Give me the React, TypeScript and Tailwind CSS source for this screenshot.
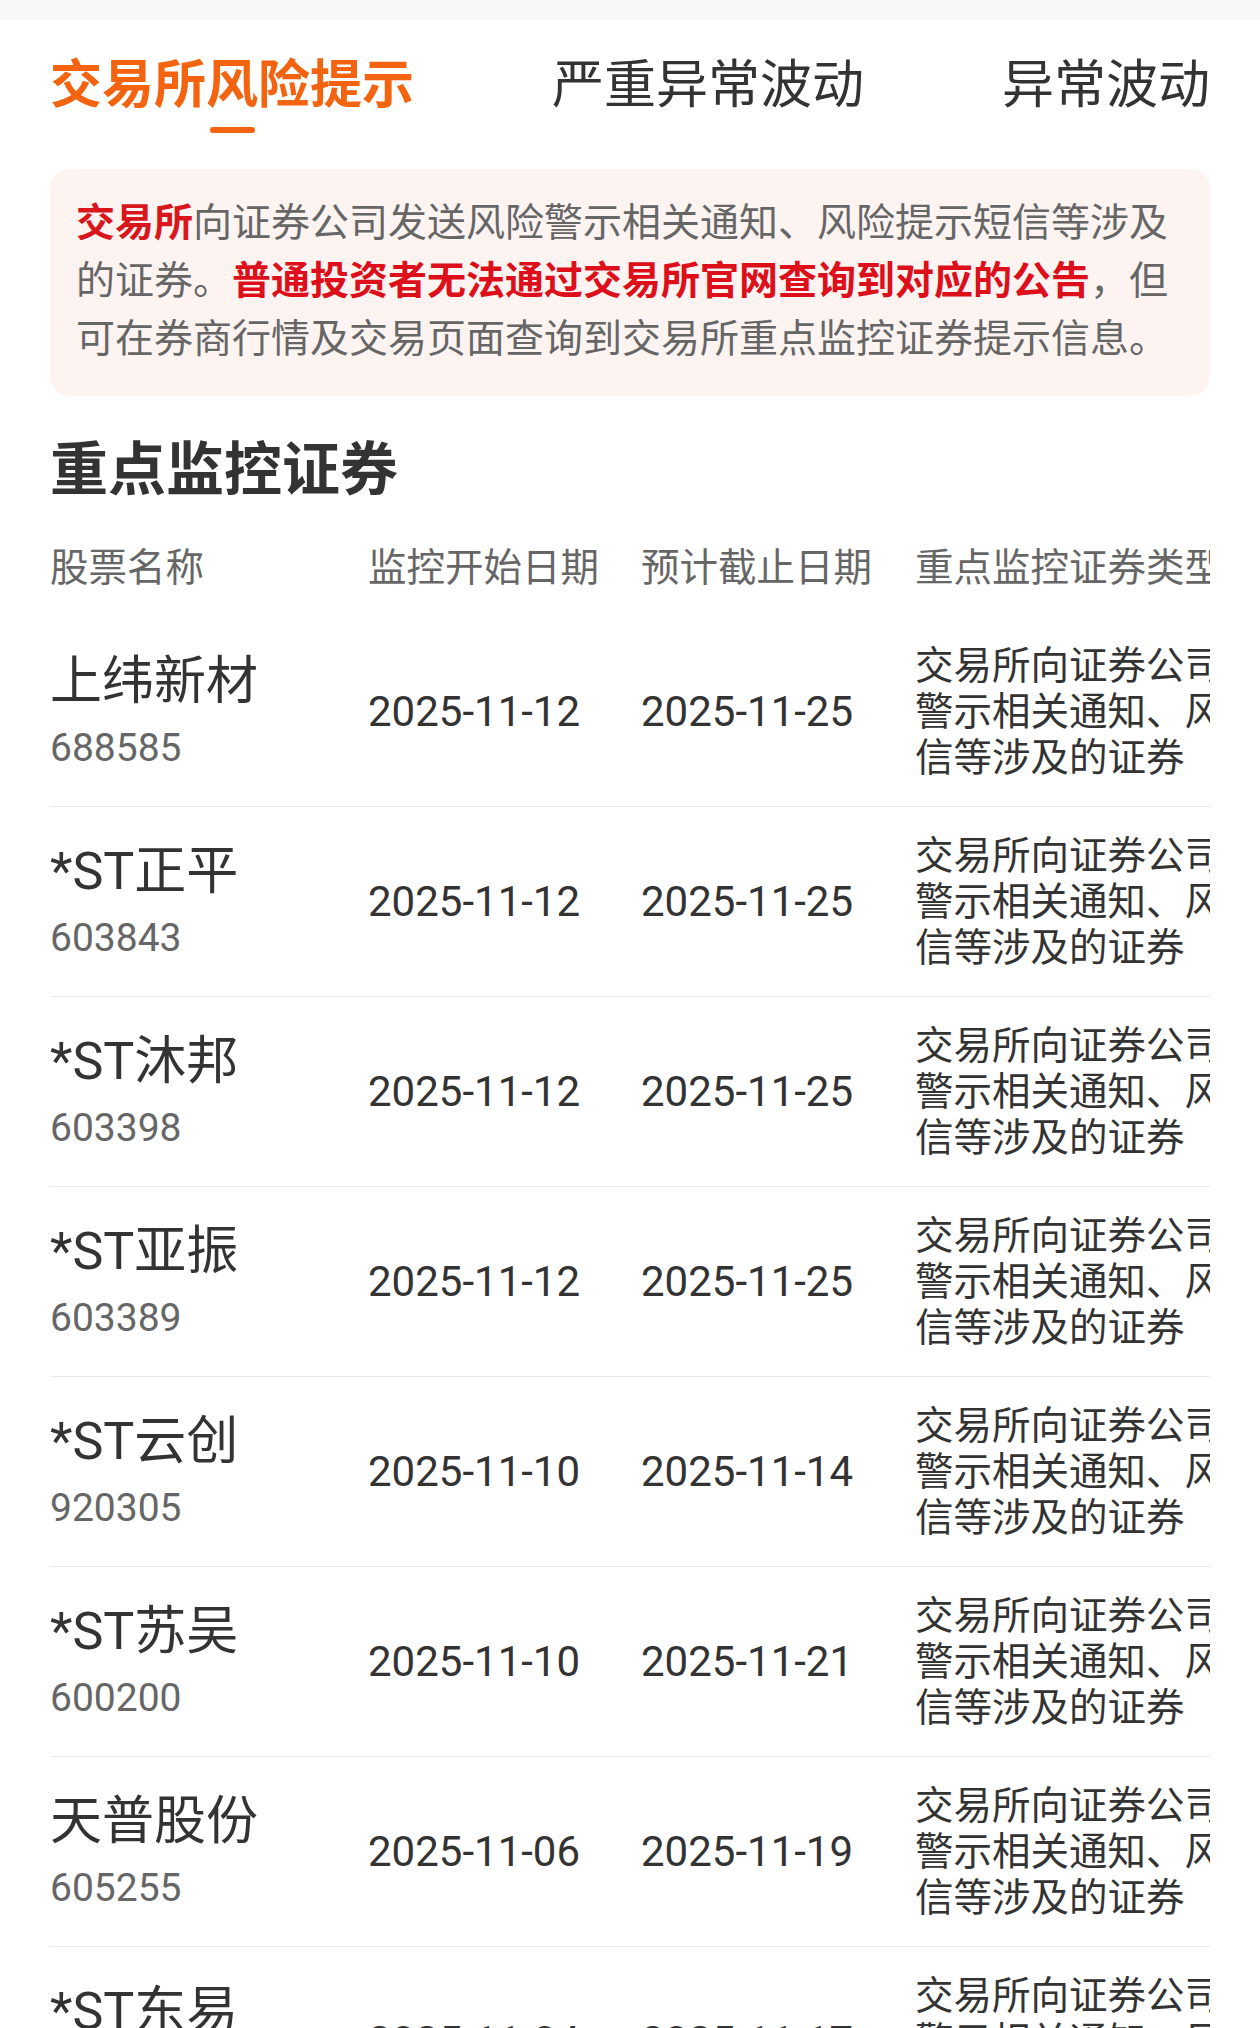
import React from "react";

const rows = [
  { name: "上纬新材", code: "688585", start: "2025-11-12", end: "2025-11-25" },
  { name: "*ST正平", code: "603843", start: "2025-11-12", end: "2025-11-25" },
  { name: "*ST沐邦", code: "603398", start: "2025-11-12", end: "2025-11-25" },
  { name: "*ST亚振", code: "603389", start: "2025-11-12", end: "2025-11-25" },
  { name: "*ST云创", code: "920305", start: "2025-11-10", end: "2025-11-14" },
  { name: "*ST苏吴", code: "600200", start: "2025-11-10", end: "2025-11-21" },
  { name: "天普股份", code: "605255", start: "2025-11-06", end: "2025-11-19" },
  { name: "*ST东易", code: "002713", start: "2025-11-04", end: "2025-11-17" },
];

const typeText = "交易所向证券公司发送风险警示相关通知、风险提示短信等涉及的证券";

export default function App() {
  return (
    <div className="min-h-[2028px] bg-white font-[Roboto,'Noto_Sans_CJK_SC',sans-serif] text-[#333]">
      <div className="h-[20px] bg-[#f6f7f9]" />

      {/* Tabs */}
      <div className="flex justify-between px-[50px] pt-[40px]">
        <div className="flex flex-col items-center">
          <span className="text-[52px] leading-[52px] font-bold text-[#f4630f] whitespace-nowrap">交易所风险提示</span>
          <span className="mt-[15px] h-[6px] w-[45px] rounded-full bg-[#f4630f]" />
        </div>
        <div className="flex flex-col items-center">
          <span className="text-[52px] leading-[52px] text-[#333] whitespace-nowrap">严重异常波动</span>
        </div>
        <div className="flex flex-col items-center">
          <span className="text-[52px] leading-[52px] text-[#333] whitespace-nowrap">异常波动</span>
        </div>
      </div>

      {/* Notice */}
      <div className="mx-[50px] mt-[36px] rounded-[20px] bg-[#fdf4f2] px-[26px] pt-[25px] pb-[28px] text-[39px] leading-[58px] text-[#666]">
        <span className="font-bold text-[#d9161b]">交易所</span>
        向证券公司发送风险警示相关通知、风险提示短信等涉及的证券。
        <span className="font-bold text-[#dc0f1a]">普通投资者无法通过交易所官网查询到对应的公告</span>
        ，但可在券商行情及交易页面查询到交易所重点监控证券提示信息。
      </div>

      {/* Heading */}
      <h2 className="mx-[50px] mt-[45px] text-[58px] leading-[58px] font-bold text-[#333]">重点监控证券</h2>

      {/* Table */}
      <div className="mx-[50px] mt-[19px] overflow-hidden">
        <div className="w-[1345px]">
          <div className="grid h-[99px] grid-cols-[318px_273px_274px_480px] items-center text-[38.5px] leading-[46px] text-[#666]">
            <div>股票名称</div>
            <div className="whitespace-nowrap">监控开始日期</div>
            <div className="whitespace-nowrap">预计截止日期</div>
            <div className="whitespace-nowrap">重点监控证券类型</div>
          </div>
          {rows.map((r) => (
            <div
              key={r.code}
              className="grid h-[190px] grid-cols-[318px_273px_274px_480px] items-center border-b border-[#e9e9e9]"
            >
              <div className="flex flex-col">
                <span className="text-[52px] leading-[62px] text-[#333] whitespace-nowrap">{r.name}</span>
                <span className="mt-[11px] text-[39px] leading-[48px] text-[#666]">{r.code}</span>
              </div>
              <div className="text-[42px] leading-[48px] text-[#333]">{r.start}</div>
              <div className="text-[42px] leading-[48px] text-[#333]">{r.end}</div>
              <div className="w-[470px] text-[38.5px] leading-[46px] text-[#333]">{typeText}</div>
            </div>
          ))}
        </div>
      </div>
    </div>
  );
}
